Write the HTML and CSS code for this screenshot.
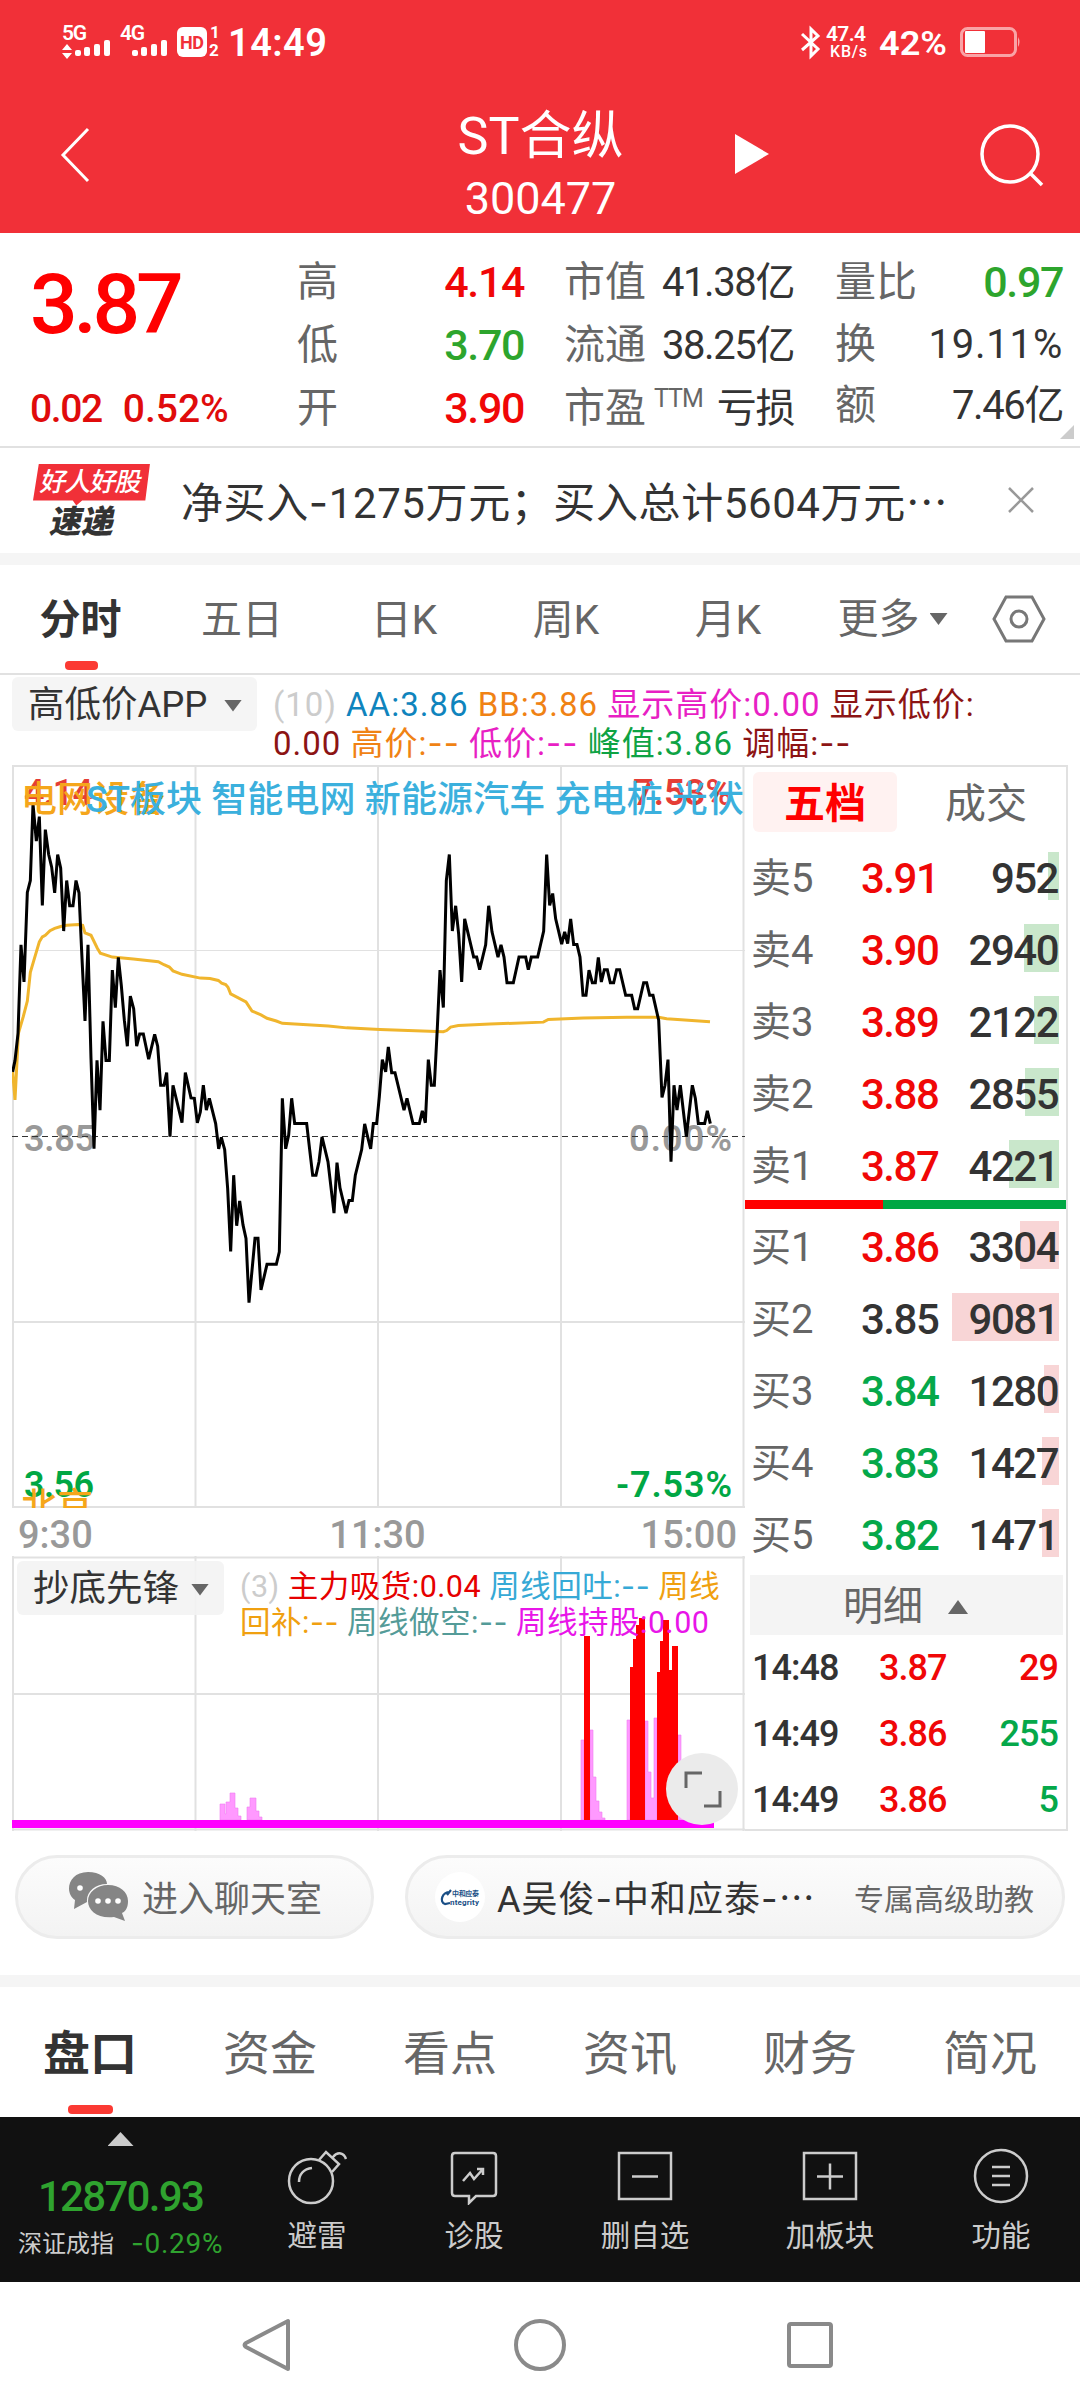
FILE: index.html
```html
<!DOCTYPE html>
<html lang="zh-CN">
<head>
  <meta charset="UTF-8" />
  <meta name="viewport" content="width=device-width, initial-scale=1.0"/>
  <title>ST合纵 300477</title>
  <link rel="stylesheet" href="styles.css">
</head>
<body>
  <div class="header">
    <div class="status-bar">
      <svg class="status-left" viewBox="0 0 340 80">
        <g fill="#fff">
          <text x="62" y="40" class="net" textLength="25">5G</text>
          <text x="120" y="40" class="net" textLength="25">4G</text>
          <path d="M62 50l5-6 5 6zM62 53l5 6 5-6z"/>
          <rect x="75" y="50" width="6" height="6" rx="2"/>
          <rect x="84" y="47" width="6" height="9" rx="2"/>
          <rect x="94" y="44" width="6" height="12" rx="2"/>
          <rect x="104" y="40" width="6" height="16" rx="2"/>
          <rect x="132" y="50" width="6" height="6" rx="2"/>
          <rect x="141" y="47" width="6" height="9" rx="2"/>
          <rect x="151" y="44" width="6" height="12" rx="2"/>
          <rect x="161" y="40" width="6" height="16" rx="2"/>
          <rect x="177" y="27" width="30" height="30" rx="6"/>
          <text x="210" y="38" class="sim">1</text>
          <text x="209" y="56" class="sim">2</text>
          <text x="228" y="56" class="clock" textLength="99">14:49</text>
        </g>
        <text x="180" y="49" class="hd" textLength="24">HD</text>
      </svg>
      <svg class="status-right" viewBox="790 0 290 80">
        <path d="M802 34l16 15-7 7V29l7 7-16 14" fill="none" stroke="#fff" stroke-width="3"/>
        <g fill="#fff">
          <text x="826" y="41" class="speed" textLength="40">47.4</text>
          <text x="830" y="57" class="unit" textLength="37">KB/s</text>
          <text x="879" y="55" class="percent" textLength="68" lengthAdjust="spacingAndGlyphs">42%</text>
          <rect x="965" y="31" width="20" height="22" rx="1"/>
          <path d="M1018 37q3 5 0 10z" opacity=".6"/>
        </g>
        <rect x="961.500" y="28.500" width="54" height="27" rx="6" fill="none" stroke="#f9a3a6" stroke-width="3"/>
      </svg>
    </div>
    <div class="title-bar">
      <svg class="back" viewBox="0 0 60 60"><path d="M43 3L18 29L43 55" fill="none" stroke="#fff" stroke-width="3"/></svg>
      <div class="title">
        <div class="stock-name">ST合纵</div>
        <div class="stock-code">300477</div>
      </div>
      <div class="play"></div>
      <svg class="search" viewBox="0 0 70 70"><circle cx="34" cy="34" r="28" fill="none" stroke="#fff" stroke-width="3.500"/><path d="M54 53l12 12" stroke="#fff" stroke-width="3.500"/></svg>
    </div>
  </div>

  <div class="quote">
    <div class="quote-main">
      <div class="price">3.87</div>
      <div class="change"><span>0.02</span><span class="rate">0.52%</span></div>
    </div>
    <div class="quote-col col-range">
      <div><label>高</label><b class="red">4.14</b></div>
      <div><label>低</label><b class="green">3.70</b></div>
      <div><label>开</label><b class="red">3.90</b></div>
    </div>
    <div class="quote-col col-value">
      <div><label>市值</label><span>41.38亿</span></div>
      <div><label>流通</label><span>38.25亿</span></div>
      <div><label>市盈<sup>TTM</sup></label><span>亏损</span></div>
    </div>
    <div class="quote-col col-ratio">
      <div><label>量比</label><b class="green">0.97</b></div>
      <div><label>换</label><span class="turnover">19.11%</span></div>
      <div><label>额</label><span>7.46亿</span></div>
    </div>
    <div class="corner"></div>
  </div>

  <div class="news">
    <div class="news-badge">
      <div class="badge-top"><span>好人好股</span></div>
      <div class="badge-bottom">速递</div>
    </div>
    <div class="news-text">净买入<span class="dash">-</span>1275万元；买入总计5604万元⋯</div>
    <svg class="close" viewBox="0 0 30 30"><path d="M3 3l24 24M27 3L3 27" stroke="#999" stroke-width="2.500"/></svg>
  </div>

  <div class="chart-tabs">
    <div class="tab active">分时</div>
    <div class="tab">五日</div>
    <div class="tab">日K</div>
    <div class="tab">周K</div>
    <div class="tab">月K</div>
    <div class="tab more">更多<i class="down"></i></div>
    <svg class="hex" viewBox="0 0 56 50"><path d="M15 3H41L53 25L41 47H15L3 25Z" fill="none" stroke="#777" stroke-width="3"/><circle cx="28" cy="25" r="8" fill="none" stroke="#777" stroke-width="3"/></svg>
  </div>

  <div class="indicator">
    <div class="select-button">高低价APP<i class="down"></i></div>
    <div class="indicator-text">
      <div><span class="c-light">(10)</span> <span class="c-blue">AA:3.86</span> <span class="c-orange">BB:3.86</span> <span class="c-pink">显示高价:0.00</span> <span class="c-dark">显示低价:</span></div>
      <div><span class="c-dark">0.00</span> <span class="c-orange">高价:<span class="dash">--</span></span> <span class="c-pink">低价:<span class="dash">--</span></span> <span class="c-green">峰值:3.86</span> <span class="c-dark">调幅:<span class="dash">--</span></span></div>
    </div>
  </div>

  <div class="board">
    <div class="charts">
      <svg class="price-chart" viewBox="12 765 733 743">
        <g stroke="#e1e1e1" stroke-width="2" fill="none">
          <path d="M12 766H745M12 1322H745M12 1507H745M13 765V1508M195.500 765V1508M378 765V1508M561 765V1508M743.500 765V1508"/>
          <path d="M12 950.500H745" stroke-width="1"/>
        </g>
        <text x="24" y="1151" class="axis" fill="#999" textLength="71">3.85</text>
        <text x="629" y="1151" class="axis" fill="#999" textLength="103">0.00%</text>
        <path d="M12 1136.500H745" stroke="#333" stroke-width="1" stroke-dasharray="6 4"/>
        <g transform="translate(0 760) scale(.33333 .38267)">
          <polyline class="average" points="38,815 45,888 52,770 55,715 70,670 82,630 91,555 100,528 118,475 127,462 136,458 150,446 164,440 182,435 200,432 235,430 248,432 255,452 273,458 292,492 301,505 337,515 400,520 475,527 492,535 508,541 519,551 546,560 601,570 630,571 655,576 665,583 677,587 684,594 692,611 738,632 756,656 783,666 801,675 829,682 847,688 985,695 1040,700 1110,703 1140,704 1330,710 1340,707 1352,698 1375,694 1470,690 1630,685 1645,678 1750,674 1880,672 1976,672 2000,676 2130,684"/>
          <polyline class="line" points="38,815 45,785 54,715 63,483 72,580 82,346 91,315 99,115 109,212 118,148 127,380 136,182 146,247 155,280 164,347 173,247 182,282 191,447 200,315 209,381 219,381 228,315 237,347 245,500 255,682 264,483 273,780 282,1016 291,785 300,915 309,683 318,785 328,785 337,549 346,647 355,516 364,590 373,680 382,748 391,617 401,650 410,748 419,716 430,716 446,782 464,717 473,748 482,850 492,850 500,817 510,984 519,850 546,948 556,817 573,883 583,884 592,948 601,920 610,850 619,915 628,884 647,950 656,1016 664,986 674,1018 683,1120 692,1284 701,1085 710,1217 719,1152 729,1215 738,1250 747,1418 765,1250 774,1250 783,1385 801,1318 829,1318 838,1285 847,884 857,1016 866,980 875,884 884,950 920,950 929,1018 938,1085 948,1085 957,1050 966,985 984,1050 1002,1184 1011,1052 1020,1118 1038,1184 1047,1151 1057,1151 1066,1085 1085,1018 1094,951 1103,985 1112,1016 1120,950 1130,950 1138,880 1147,783 1157,815 1165,750 1175,817 1185,817 1212,915 1221,884 1239,950 1258,950 1267,917 1276,948 1285,783 1294,850 1303,850 1312,700 1320,549 1330,647 1339,315 1348,247 1357,447 1367,381 1376,455 1385,580 1394,415 1421,515 1430,515 1439,548 1457,483 1466,381 1476,449 1494,515 1503,483 1512,515 1521,582 1540,582 1557,515 1577,515 1585,548 1594,515 1613,515 1631,447 1640,247 1649,380 1658,349 1667,415 1685,481 1694,449 1703,480 1712,415 1721,482 1731,482 1740,515 1749,615 1758,615 1767,549 1777,582 1786,582 1795,516 1804,580 1813,548 1822,548 1831,582 1841,582 1850,548 1859,548 1877,615 1895,615 1904,650 1913,650 1931,582 1940,582 1949,615 1959,615 1976,680 1986,882 1995,850 2004,783 2013,1050 2022,850 2031,915 2041,850 2059,984 2077,850 2086,884 2095,950 2114,950 2122,917 2131,950"/>
        </g>
        <text x="24" y="805" class="axis" fill="#e53d36" textLength="69">4.14</text>
        <text x="633" y="805" class="axis" fill="#e53d36" textLength="99">7.53%</text>
        <text x="24" y="1497" class="axis" fill="#00a744" textLength="70">3.56</text>
        <text x="616" y="1497" class="axis" fill="#00a744" textLength="116">-7.53%</text>
        <text x="21" y="812" class="sector" fill="#f5a61b">电网设备</text>
        <text x="21" y="1519" class="sector" fill="#f5a61b">北京</text>
        <text x="86" y="812" class="sector" fill="#3bb0dd" textLength="658">ST板块 智能电网 新能源汽车 充电桩 光伏</text>
      </svg>
      <div class="time-axis"><span>9:30</span><span>11:30</span><span>15:00</span></div>
      <div class="sub-chart">
        <svg class="volume" viewBox="12 1556 733 275">
          <path d="M12 1557.500H745M12 1694H745M12 1829.500H745M13 1556V1831M195.500 1556V1831M378 1556V1831M561 1556V1831M743.500 1556V1831" stroke="#e1e1e1" stroke-width="2" fill="none"/>
          <g fill="#ff99ff" stroke="#ef7cf0" stroke-width=".6">
            <path d="M220 1820V1804h5v10h1v-12h4v-9h5v15h3v8h3v4z"/>
            <path d="M247 1820V1807h3v-9h6v13h3v6h3v3z"/>
            <path d="M581 1820V1740h3v80zM590 1820V1730h3v47h3v24h3v11h3v6h3v2z"/>
            <path d="M627 1820V1720h3v100zM645 1820V1721h3v51h3v26h3v-80h3v102zM678 1820V1735h3v50h3v35z"/>
          </g>
          <g fill="#f00">
            <path d="M584 1820V1636h6v184z"/>
            <path d="M630 1820V1667h3v-28h3v-14h3v-7h6v202z"/>
            <path d="M657 1820V1672h3v-31h3v-21h6v50h3v-24h6v174z"/>
          </g>
          <path d="M12 1824H714" stroke="#f0f" stroke-width="8"/>
        </svg>
        <div class="sub-head">
          <div class="select-button small">抄底先锋<i class="down"></i></div>
          <div class="indicator-text small">
            <div><span class="c-light">(3)</span> <span class="c-red">主力吸货:0.04</span> <span class="c-sky">周线回吐:<span class="dash">--</span></span> <span class="c-amber">周线</span></div>
            <div><span class="c-amber">回补:<span class="dash">--</span></span> <span class="c-teal">周线做空:<span class="dash">--</span></span> <span class="c-magenta">周线持股:0.00</span></div>
          </div>
        </div>
        <svg class="expand" viewBox="0 0 72 72"><circle cx="36" cy="36" r="36" fill="#ebebeb"/><path d="M36 20H20V35M54 38V53H38" fill="none" stroke="#666" stroke-width="3"/></svg>
      </div>
    </div>

    <div class="book">
      <div class="book-tabs"><div class="active">五档</div><div class="deals">成交</div></div>
      <div class="level sell"><label>卖5</label><b class="red">3.91</b><span>952</span><i style="width:11px"></i></div>
      <div class="level sell"><label>卖4</label><b class="red">3.90</b><span>2940</span><i style="width:35px"></i></div>
      <div class="level sell"><label>卖3</label><b class="red">3.89</b><span>2122</span><i style="width:25px"></i></div>
      <div class="level sell"><label>卖2</label><b class="red">3.88</b><span>2855</span><i style="width:34px"></i></div>
      <div class="level sell"><label>卖1</label><b class="red">3.87</b><span>4221</span><i style="width:50px"></i></div>
      <div class="ratio"><div class="ratio-buy"></div></div>
      <div class="level buy"><label>买1</label><b class="red">3.86</b><span>3304</span><i style="width:39px"></i></div>
      <div class="level buy"><label>买2</label><b>3.85</b><span>9081</span><i style="width:107px"></i></div>
      <div class="level buy"><label>买3</label><b class="down-green">3.84</b><span>1280</span><i style="width:15px"></i></div>
      <div class="level buy"><label>买4</label><b class="down-green">3.83</b><span>1427</span><i style="width:17px"></i></div>
      <div class="level buy"><label>买5</label><b class="down-green">3.82</b><span>1471</span><i style="width:17px"></i></div>
      <div class="detail-title">明细<i class="up"></i></div>
      <div class="tick"><span>14:48</span><b class="red">3.87</b><em class="red">29</em></div>
      <div class="tick"><span>14:49</span><b class="red">3.86</b><em class="down-green">255</em></div>
      <div class="tick"><span>14:49</span><b class="red">3.86</b><em class="down-green">5</em></div>
    </div>
  </div>

  <div class="chat">
    <div class="pill chat-room">
      <svg viewBox="0 0 62 52"><g fill="#858585"><path d="M20 1C32 1 39 7 39 13C27 13 18 21 19 31L6 38L7 29C-4 22 0 1 20 1Z"/><path d="M40 14C52 14 60 21 60 30C60 36 58 40 54 42L57 50L46 46C30 48 20 40 20 30C20 21 29 14 40 14Z"/></g><g fill="#fff"><circle cx="12" cy="17" r="2.800"/><circle cx="30" cy="30" r="2.800"/><circle cx="40" cy="30" r="2.800"/><circle cx="50" cy="30" r="2.800"/></g></svg>
      <span>进入聊天室</span>
    </div>
    <div class="pill adviser">
      <svg viewBox="0 0 50 50"><circle cx="25" cy="25" r="25" fill="#fff"/><path d="M15 20C7 20 4 30 10 32L15 31M12 23L16 18" fill="none" stroke="#1a4f86" stroke-width="2.200"/><text x="17" y="24" font-size="7" font-weight="700" fill="#1a4f86" textLength="27">中和应泰</text><text x="15" y="33" font-size="8" font-weight="700" fill="#1a4f86" textLength="29">ntegrity</text></svg>
      <span class="adviser-name">A吴俊<span class="dash">-</span>中和应泰<span class="dash">-</span>⋯</span>
      <span class="adviser-role">专属高级助教</span>
    </div>
  </div>

  <div class="info-tabs">
    <div class="active">盘口</div>
    <div>资金</div>
    <div>看点</div>
    <div>资讯</div>
    <div>财务</div>
    <div>简况</div>
  </div>

  <div class="toolbar">
    <div class="index">
      <i class="up"></i>
      <div class="index-value">12870.93</div>
      <div class="index-row"><span>深证成指</span><b><span class="dash">-</span>0.29%</b></div>
    </div>
    <div class="tool">
      <svg viewBox="0 0 62 58"><g fill="none" stroke="#ccc" stroke-width="2.500"><circle cx="25" cy="34" r="22"/><path d="M13 35C13 27 18 22 26 21M33 13L40 5L53 17L46 25M47 10C52 4 58 6 60 12"/></g></svg>
      <span>避雷</span>
    </div>
    <div class="tool">
      <svg viewBox="0 0 62 58"><path d="M12 6H50Q53 6 53 9V46Q53 49 50 49H33L26 56V49H12Q9 49 9 46V9Q9 6 12 6ZM20 34L27 26L31 32L40 22M34 22H40V28" fill="none" stroke="#ccc" stroke-width="2.500"/></svg>
      <span>诊股</span>
    </div>
    <div class="tool">
      <svg viewBox="0 0 62 58"><path d="M5 6H57V52H5ZM18 29.500H44" fill="none" stroke="#ccc" stroke-width="2.500"/></svg>
      <span>删自选</span>
    </div>
    <div class="tool">
      <svg viewBox="0 0 62 58"><path d="M5 6H57V52H5ZM18 29.500H44M31 16.500V42.500" fill="none" stroke="#ccc" stroke-width="2.500"/></svg>
      <span>加板块</span>
    </div>
    <div class="tool">
      <svg viewBox="0 0 62 58"><circle cx="31" cy="29" r="26" fill="none" stroke="#ccc" stroke-width="2.500"/><path d="M22 20H40M22 29H40M22 38H40" stroke="#ccc" stroke-width="2.500"/></svg>
      <span>功能</span>
    </div>
  </div>

  <div class="nav-bar">
    <svg viewBox="0 0 60 60"><path d="M48 6V54L6 32Q3 30 6 28Z" fill="none" stroke="#8a8a8a" stroke-width="4" stroke-linejoin="round"/></svg>
    <svg viewBox="0 0 60 60"><circle cx="30" cy="30" r="24" fill="none" stroke="#8a8a8a" stroke-width="4"/></svg>
    <svg viewBox="0 0 60 60"><rect x="9" y="9" width="42" height="42" rx="2" fill="none" stroke="#8a8a8a" stroke-width="4"/></svg>
  </div>
</body>
</html>
```
FILE: styles.css
```css
* {
  margin: 0;
  padding: 0;
  box-sizing: border-box;
}
body {
  width: 1080px;
  height: 2408px;
  background: #fff;
  color: #333;
  font-family: Roboto, "Noto Sans CJK SC", sans-serif;
  font-size: 41px;
  line-height: 1;
  white-space: nowrap;
}
svg {
  display: block;
  flex: none;
}
i, em {
  font-style: normal;
}
b {
  font-weight: 500;
}
.dash {
  font-family: Inter, sans-serif;
}
.red {
  color: #f00707;
}
.green {
  color: #2da52d;
}
.down-green {
  color: #05a84a;
}

/* header */
.header {
  height: 233px;
  background: #f13038;
  color: #fff;
}
.status-bar {
  height: 80px;
  display: flex;
  justify-content: space-between;
}
.status-left {
  width: 340px;
}
.status-right {
  width: 290px;
}
.net, .speed {
  font-size: 21px;
  font-weight: 600;
}
.unit {
  font-size: 16px;
  font-weight: 500;
}
.sim {
  font-size: 17px;
  font-weight: 700;
}
.hd {
  font-size: 18px;
  font-weight: 700;
  fill: #f13038;
}
.clock {
  font-size: 38px;
  font-weight: 600;
}
.percent {
  font-size: 34px;
  font-weight: 600;
}
.title-bar {
  display: grid;
  grid-template-columns: 459px 163px 113px 239px 106px;
  height: 150px;
}
.back {
  width: 60px;
  height: 60px;
  margin: 46px 0 0 45px;
}
.title {
  display: flex;
  flex-direction: column;
  align-items: center;
}
.stock-name {
  margin-top: 24px;
  font-size: 52px;
  line-height: 66px;
}
.stock-code {
  font-size: 45px;
  line-height: 52px;
  margin-top: 3px;
}
.play {
  grid-column: 4;
  width: 34px;
  height: 40px;
  margin-top: 54px;
  background: #fff;
  clip-path: polygon(0 0, 100% 50%, 0 100%);
}
.search {
  width: 70px;
  height: 70px;
  margin: 40px 0 0 2px;
}

/* quote */
.quote {
  position: relative;
  height: 215px;
  border-bottom: 2px solid #e1e1e1;
  display: grid;
  grid-template-columns: 297px 267px 271px 245px;
}
.quote-main {
  padding-left: 30px;
}
.price {
  margin-top: 28px;
  height: 88px;
  line-height: 88px;
  font-size: 84px;
  font-weight: 500;
  letter-spacing: -4.3px;
  color: #f00;
}
.change {
  display: flex;
  gap: 21px;
  margin-top: 35px;
  font-size: 39px;
  line-height: 50px;
  font-weight: 500;
  letter-spacing: -1.4px;
  color: #e00b0b;
}
.change .rate {
  letter-spacing: 0;
}
.quote-col {
  padding-top: 18px;
}
.quote-col > div {
  height: 63px;
  line-height: 63px;
  display: flex;
  justify-content: space-between;
}
.quote-col label {
  color: #666;
}
.quote-col b {
  font-size: 43px;
  letter-spacing: -1.4px;
}
.quote-col span {
  font-size: 40px;
  letter-spacing: -1.4px;
}
.quote-col .turnover {
  letter-spacing: .8px;
}
.col-range {
  padding-right: 40px;
}
.col-value {
  padding-right: 41px;
}
.col-ratio {
  padding-right: 17px;
}
.col-ratio > div {
  height: 61.5px;
}
.quote sup {
  font-size: 25px;
  line-height: 0;
  margin-left: 8px;
  letter-spacing: -1px;
}
.corner {
  position: absolute;
  right: 6px;
  bottom: 7px;
  width: 14px;
  height: 14px;
  background: #ccc;
  clip-path: polygon(100% 0, 100% 100%, 0 100%);
}

/* news */
.news {
  height: 117px;
  border-bottom: 12px solid #f5f5f5;
  display: flex;
  align-items: center;
  padding: 0 44px 0 33px;
}
.news-badge {
  width: 148px;
  height: 74px;
}
.badge-top {
  width: 117px;
  height: 42px;
  background: #f13038;
  clip-path: polygon(5% 0, 100% 0, 96% 88%, 42% 88%, 37% 100%, 34% 88%, 0 88%);
  color: #fff;
  font-size: 26px;
  font-weight: 500;
  line-height: 37px;
  text-align: center;
  letter-spacing: -1px;
}
.badge-top span, .badge-bottom {
  display: inline-block;
  transform: skewX(-12deg);
}
.badge-bottom {
  display: block;
  width: 66px;
  margin-left: 18px;
  font-size: 32px;
  font-weight: 900;
  line-height: 32px;
}
.news-text {
  width: 800px;
  padding-top: 5px;
  font-size: 42px;
  letter-spacing: .6px;
}
.close {
  width: 30px;
  margin: -1px 0 0 25px;
}

/* chart tabs */
.chart-tabs {
  height: 110px;
  border-bottom: 2px solid #e1e1e1;
  display: grid;
  grid-template-columns: 161px 162px 162px 162px 162px 167px 104px;
  align-items: center;
  color: #666;
}
.tab {
  position: relative;
  height: 108px;
  line-height: 110px;
  text-align: center;
}
.tab.active {
  color: #333;
  font-weight: 700;
}
.tab.active::after {
  content: "";
  position: absolute;
  left: 65px;
  bottom: 3px;
  width: 33px;
  height: 9px;
  border-radius: 4px;
  background: #fb3a33;
}
.more {
  display: flex;
  align-items: center;
  justify-content: center;
  gap: 10px;
}
.down {
  width: 18px;
  height: 12px;
  background: #666;
  clip-path: polygon(0 0, 100% 0, 50% 100%);
}
.up {
  width: 20px;
  height: 14px;
  background: #666;
  clip-path: polygon(50% 0, 100% 100%, 0 100%);
}
.hex {
  width: 56px;
  margin-left: 15px;
}

/* indicator */
.indicator {
  height: 90px;
  padding: 2px 12px 0;
  display: flex;
}
.select-button {
  width: 245px;
  height: 54px;
  padding: 3px 15px 0 16px;
  border-radius: 6px;
  background: #f5f5f5;
  display: flex;
  align-items: center;
  justify-content: space-between;
  font-size: 36.500px;
}
.indicator-text {
  margin-left: 16px;
  padding-top: 8px;
  font-size: 33px;
  line-height: 39px;
  letter-spacing: 1px;
}
.c-light { color: #ccc; }
.c-blue { color: #0f84bd; }
.c-orange { color: #f08214; }
.c-pink { color: #e81fc4; }
.c-dark { color: #8c1414; }
.c-green { color: #0ea344; }
.c-red { color: #e60000; }
.c-sky { color: #36a9d6; }
.c-amber { color: #f0a010; }
.c-teal { color: #549b98; }
.c-magenta { color: #e815e8; }

/* charts */
.board {
  display: flex;
  height: 1066px;
  padding-left: 12px;
}
.charts {
  width: 733px;
  flex: none;
}
.price-chart {
  width: 733px;
  height: 743px;
}
.axis {
  font-size: 36px;
  font-weight: 600;
}
.sector {
  font-size: 36px;
  font-weight: 500;
}
.line, .average {
  fill: none;
  stroke: #000;
  stroke-width: 3;
  vector-effect: non-scaling-stroke;
}
.average {
  stroke: #f0b52d;
}
.time-axis {
  height: 48px;
  padding: 5px 8px 0 6px;
  display: grid;
  grid-template-columns: 1fr 1fr 1fr;
  align-items: center;
  text-align: center;
  color: #999;
  font-size: 38px;
  font-weight: 500;
}
.time-axis span:first-child {
  text-align: left;
}
.time-axis span:last-child {
  text-align: right;
}
.sub-chart {
  position: relative;
  height: 275px;
}
.volume {
  width: 733px;
  height: 275px;
}
.sub-head {
  position: absolute;
  top: 5px;
  left: 5px;
  display: flex;
}
.select-button.small {
  width: 207px;
  background: rgba(243, 243, 243, .9);
}
.indicator-text.small {
  padding-top: 7px;
  font-size: 30.500px;
  line-height: 35px;
  letter-spacing: .5px;
}
.expand {
  position: absolute;
  left: 654px;
  top: 197px;
  width: 72px;
}

/* order book */
.book {
  width: 323px;
  border: 2px solid #e1e1e1;
  border-left: 0;
}
.book-tabs {
  height: 73px;
  padding: 5px 9px 0 8px;
  display: grid;
  grid-template-columns: 144px 1fr;
  color: #666;
}
.book-tabs div {
  height: 60px;
  line-height: 64px;
  border-radius: 6px;
  text-align: center;
}
.book-tabs .deals {
  padding-left: 18px;
}
.book-tabs .active {
  background: #fff2f1;
  color: #f00;
  font-weight: 700;
}
.level {
  position: relative;
  z-index: 0;
  height: 72px;
  padding: 5px 8px 0 6px;
  display: grid;
  grid-template-columns: 110px 90px 1fr;
  align-items: center;
  font-size: 42px;
  letter-spacing: -1.5px;
}
.level label {
  color: #666;
  font-size: 40px;
  letter-spacing: 0;
}
.level b {
  letter-spacing: -1.5px;
}
.level span {
  text-align: right;
  font-weight: 500;
}
.level i {
  position: absolute;
  z-index: -1;
  right: 7px;
  top: 12px;
  height: 48px;
}
.sell i {
  background: #c9e7cb;
}
.buy i {
  background: #f8d5d6;
}
.ratio {
  height: 9px;
  background: #00a744;
}
.ratio-buy {
  width: 138px;
  height: 9px;
  background: #f00;
}
.detail-title {
  height: 60px;
  margin: 6px 3px 0 5px;
  padding: 4px 2px 0 0;
  background: #f4f4f4;
  color: #666;
  font-size: 40px;
  display: flex;
  align-items: center;
  justify-content: center;
  gap: 25px;
}
.tick {
  height: 66px;
  padding: 0 8px 0 7px;
  display: grid;
  grid-template-columns: 127px 90px 1fr;
  align-items: center;
  font-size: 36px;
  font-weight: 500;
  letter-spacing: -1px;
}
.tick em {
  text-align: right;
}

/* chat */
.chat {
  height: 156px;
  border-bottom: 12px solid #f5f5f5;
  padding: 24px 15px 0;
  display: flex;
  gap: 31px;
}
.pill {
  height: 84px;
  border: 3px solid #ececec;
  border-radius: 42px;
  background: linear-gradient(#fcfcfc, #f3f3f3);
  display: flex;
  align-items: center;
}
.pill > span {
  padding-top: 5px;
}
.chat-room {
  width: 359px;
  padding-left: 50px;
  gap: 12px;
  color: #666;
  font-size: 36px;
}
.chat-room svg {
  width: 62px;
}
.adviser {
  width: 660px;
  padding-left: 27px;
  font-size: 36px;
}
.adviser svg {
  width: 50px;
}
.adviser-name {
  width: 357px;
  margin-left: 12px;
  letter-spacing: 1px;
}
.adviser-role {
  color: #666;
  font-size: 30px;
}

/* info tabs */
.info-tabs {
  height: 130px;
  display: grid;
  grid-template-columns: repeat(6, 180px);
  text-align: center;
  font-size: 47px;
  line-height: 133px;
  color: #666;
}
.info-tabs div {
  height: 130px;
}
.info-tabs .active {
  position: relative;
  color: #333;
  font-weight: 700;
}
.info-tabs .active::after {
  content: "";
  position: absolute;
  left: 68px;
  bottom: 3px;
  width: 45px;
  height: 9px;
  border-radius: 4px;
  background: #fb3a33;
}

/* toolbar */
.toolbar {
  height: 165px;
  background: #111;
  color: #ccc;
  display: grid;
  grid-template-columns: 241px 152px 162px 180px 190px 152px;
}
.index {
  display: flex;
  flex-direction: column;
  align-items: center;
}
.index .up {
  width: 26px;
  height: 14px;
  margin-top: 15px;
  background: #ccc;
}
.index-value {
  margin-top: 29px;
  font-size: 42px;
  line-height: 44px;
  font-weight: 500;
  letter-spacing: -1.700px;
  color: #2fa32f;
}
.index-row {
  display: flex;
  align-items: center;
  gap: 17px;
  margin-top: 9px;
  font-size: 24px;
  line-height: 30px;
}
.index-row b {
  font-size: 28px;
  font-weight: 400;
  letter-spacing: .7px;
  color: #2fa32f;
}
.tool {
  display: flex;
  flex-direction: column;
  align-items: center;
  font-size: 29.500px;
}
.tool svg {
  width: 62px;
  height: 58px;
  margin: 30px 0 17px;
}

/* system navigation */
.nav-bar {
  height: 126px;
  padding: 0 240px;
  display: flex;
  justify-content: space-between;
  align-items: center;
}
.nav-bar svg {
  width: 60px;
}
```
